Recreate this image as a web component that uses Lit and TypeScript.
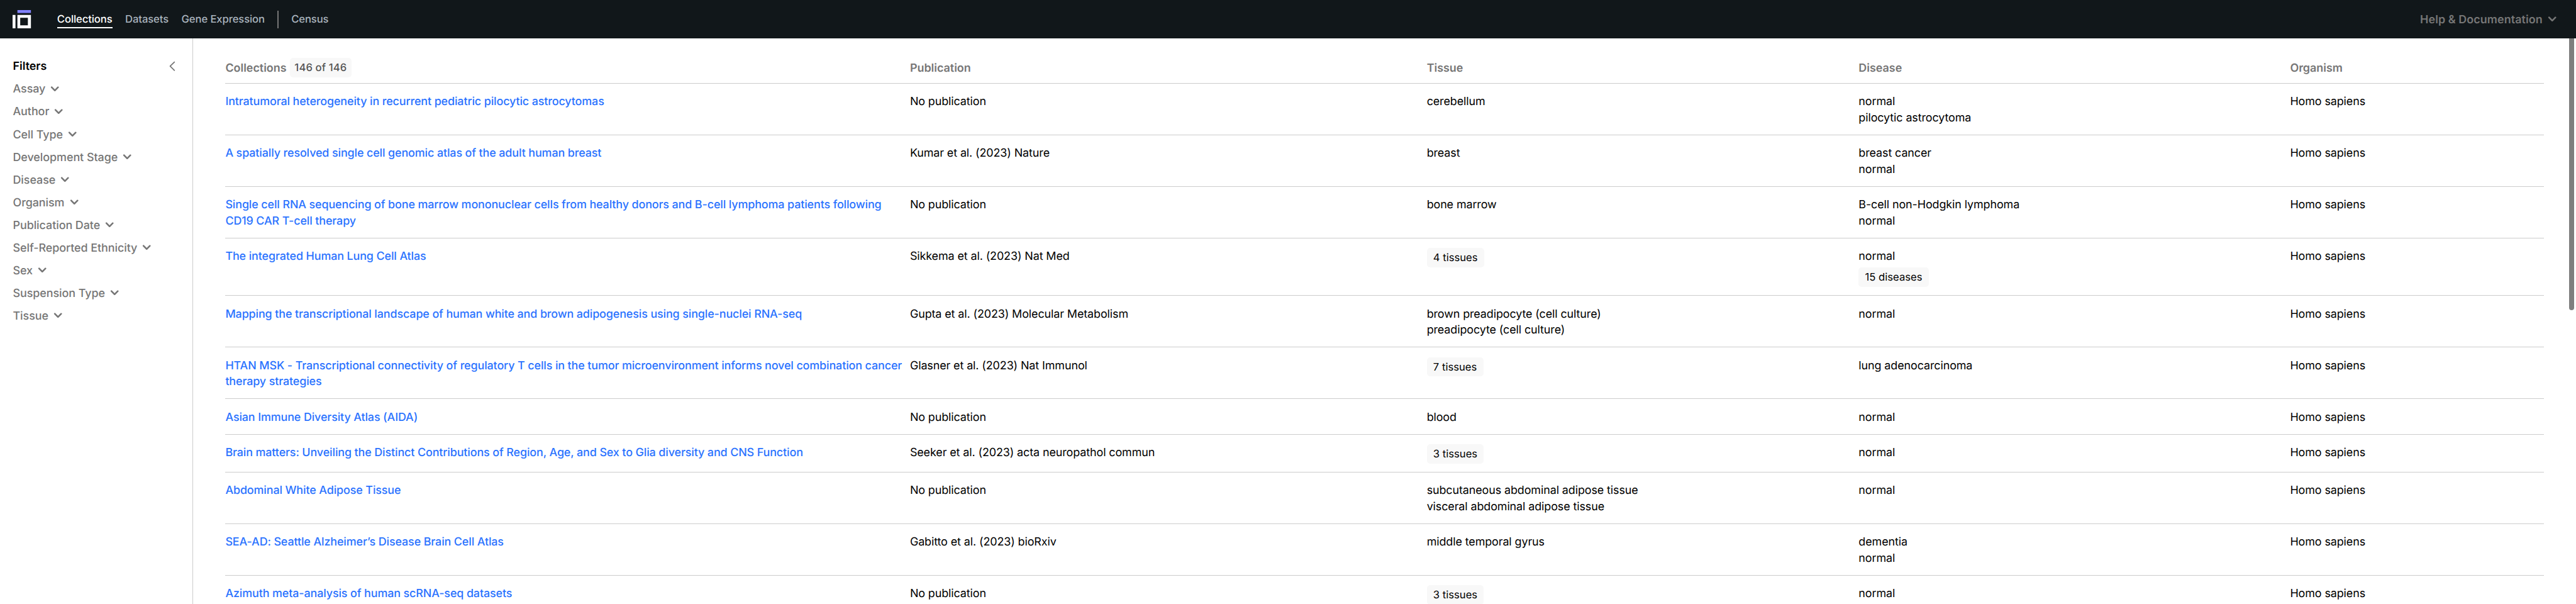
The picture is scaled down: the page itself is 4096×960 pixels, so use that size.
import { LitElement, html, css } from "lit";
import { customElement } from "lit/decorators.js";

interface Cell { lines: string[]; chip?: string }
interface Row { title: string; publication: string; tissue: Cell; disease: Cell }

const t = (...lines: string[]): Cell => ({ lines });
const c = (chip: string, ...lines: string[]): Cell => ({ lines, chip });

const ROWS: Row[] = [
  { title: "Intratumoral heterogeneity in recurrent pediatric pilocytic astrocytomas", publication: "No publication", tissue: t("cerebellum"), disease: t("normal", "pilocytic astrocytoma") },
  { title: "A spatially resolved single cell genomic atlas of the adult human breast", publication: "Kumar et al. (2023) Nature", tissue: t("breast"), disease: t("breast cancer", "normal") },
  { title: "Single cell RNA sequencing of bone marrow mononuclear cells from healthy donors and B-cell lymphoma patients following CD19 CAR T-cell therapy", publication: "No publication", tissue: t("bone marrow"), disease: t("B-cell non-Hodgkin lymphoma", "normal") },
  { title: "The integrated Human Lung Cell Atlas", publication: "Sikkema et al. (2023) Nat Med", tissue: c("4 tissues"), disease: c("15 diseases", "normal") },
  { title: "Mapping the transcriptional landscape of human white and brown adipogenesis using single-nuclei RNA-seq", publication: "Gupta et al. (2023) Molecular Metabolism", tissue: t("brown preadipocyte (cell culture)", "preadipocyte (cell culture)"), disease: t("normal") },
  { title: "HTAN MSK - Transcriptional connectivity of regulatory T cells in the tumor microenvironment informs novel combination cancer therapy strategies", publication: "Glasner et al. (2023) Nat Immunol", tissue: c("7 tissues"), disease: t("lung adenocarcinoma") },
  { title: "Asian Immune Diversity Atlas (AIDA)", publication: "No publication", tissue: t("blood"), disease: t("normal") },
  { title: "Brain matters: Unveiling the Distinct Contributions of Region, Age, and Sex to Glia diversity and CNS Function", publication: "Seeker et al. (2023) acta neuropathol commun", tissue: c("3 tissues"), disease: t("normal") },
  { title: "Abdominal White Adipose Tissue", publication: "No publication", tissue: t("subcutaneous abdominal adipose tissue", "visceral abdominal adipose tissue"), disease: t("normal") },
  { title: "SEA-AD: Seattle Alzheimer’s Disease Brain Cell Atlas", publication: "Gabitto et al. (2023) bioRxiv", tissue: t("middle temporal gyrus"), disease: t("dementia", "normal") },
  { title: "Azimuth meta-analysis of human scRNA-seq datasets", publication: "No publication", tissue: c("3 tissues"), disease: t("normal") },
];

const FILTERS = ["Assay", "Author", "Cell Type", "Development Stage", "Disease", "Organism", "Publication Date", "Self-Reported Ethnicity", "Sex", "Suspension Type", "Tissue"];

const chevronDown = html`<svg class="chev" viewBox="0 0 16 16"><path fill="currentColor" d="M12 5c-.28 0-.53.11-.71.29L8 8.59l-3.29-3.3a1.003 1.003 0 00-1.42 1.42l4 4c.18.18.43.29.71.29s.53-.11.71-.29l4-4A1.003 1.003 0 0012 5z"/></svg>`;

@customElement("app-header")
class AppHeader extends LitElement {
  static styles = css`
    :host { display: flex; align-items: center; justify-content: space-between; height: 48px; padding: 0 16px; background: #11171a; box-sizing: border-box; flex: none; }
    .left, .nav { display: flex; align-items: center; }
    .logo { display: block; width: 23px; height: 23px; margin-right: 32px; }
    .nav { gap: 16px; height: 22px; }
    .item { font-size: 13px; font-weight: 500; line-height: 18px; height: 22px; color: #a9b3bd; box-sizing: border-box; padding-top: 2.8px; letter-spacing: -0.08px; }
    .active { color: #fff; border-bottom: 2px solid #fff; }
    .divider { width: 1px; height: 22px; background: #767676; }
    .help { display: flex; align-items: center; gap: 4px; font-size: 14px; font-weight: 600; line-height: 18px; letter-spacing: 0.06px; color: #767676; margin-right: 5.6px; }
    .help span { padding-top: 1.6px; }
    .chev { width: 16px; height: 16px; display: block; }
  `;
  render() {
    return html`
      <div class="left">
        <svg class="logo" viewBox="0 0 23 23">
          <path fill="#8282ff" d="M6 0h16.8v3.6H6z"/>
          <path fill="#fff" fill-rule="evenodd" d="M0 6h3.6v16.8H0zM6 6h16.8v16.8H6zM9.5 9.5v9.5h9.5V9.5z"/>
        </svg>
        <nav class="nav">
          <span class="item active">Collections</span>
          <span class="item">Datasets</span>
          <span class="item">Gene Expression</span>
          <span class="divider"></span>
          <span class="item">Census</span>
        </nav>
      </div>
      <div class="help"><span>Help &amp; Documentation</span>${chevronDown}</div>`;
  }
}

@customElement("filter-sidebar")
class FilterSidebar extends LitElement {
  static styles = css`
    :host { display: block; width: 240px; box-sizing: border-box; padding: 24px 16px 0; border-right: 0.79px solid #ccc; flex: none; }
    .head { display: flex; justify-content: space-between; align-items: center; height: 20px; font-size: 14px; font-weight: 600; color: #000; margin-bottom: 9.1px; }
    .head span, .filter span { padding-top: 1.4px; }
    .collapse { width: 16px; height: 16px; display: block; margin-right: 1px; color: #767676; }
    .filter { display: flex; align-items: center; gap: 4px; height: 18.18px; margin-bottom: 10px; font-size: 14px; font-weight: 500; letter-spacing: -0.04px; line-height: 18px; color: #767676; }
    .chev { width: 16px; height: 16px; display: block; }
  `;
  render() {
    return html`
      <div class="head"><span>Filters</span>
        <svg class="collapse" viewBox="0 0 16 16"><path d="M10.4 2.8L5.1 8l5.3 5.2" fill="none" stroke="currentColor" stroke-width="1.4" stroke-linecap="round" stroke-linejoin="round"/></svg>
      </div>
      ${FILTERS.map((f) => html`<div class="filter"><span>${f}</span>${chevronDown}</div>`)}`;
  }
}

@customElement("collections-table")
class CollectionsTable extends LitElement {
  static styles = css`
    :host { display: block; flex: 1; min-width: 0; padding: 16px 40px 0; box-sizing: border-box; font-size: 14px; line-height: 20px; letter-spacing: -0.075px; color: #000; }
    .row { display: grid; grid-template-columns: 842.4px 634px 528.5px 528px 1fr; column-gap: 8px; padding: 12.8px 0 10.49px; border-bottom: 0.79px solid #ccc; box-sizing: border-box; }
    .header { height: 40px; padding: 8px 0 0; font-weight: 600; letter-spacing: 0; color: #767676; }
    .header .name { display: flex; gap: 4px; height: 24px; line-height: 20px; }
    .label { padding-top: 2.8px; }
    .count { display: inline-block; height: 24px; line-height: 25.6px; padding: 0 6px; border-radius: 4px; background: #f8f8f8; color: #545454; font-size: 13px; font-weight: 500; letter-spacing: 0.1px; }
    .title { color: #2b73ff; font-weight: 500; letter-spacing: -0.09px; }
    .cell { display: flex; flex-direction: column; align-items: flex-start; }
    .chip { height: 24px; line-height: 25.6px; margin-top: -0.8px; padding: 0 8px; border-radius: 4px; background: #f8f8f8; font-size: 13px; letter-spacing: 0; }
    .chip:not(:first-child) { margin-top: 3.2px; }
  `;
  cell(v: Cell) {
    return html`<div class="cell">${v.lines.map((l) => html`<span>${l}</span>`)}${v.chip ? html`<span class="chip">${v.chip}</span>` : ""}</div>`;
  }
  render() {
    return html`
      <div class="row header">
        <div class="name"><span class="label">Collections</span><span class="count">146 of 146</span></div>
        <span class="label">Publication</span><span class="label">Tissue</span><span class="label">Disease</span><span class="label">Organism</span>
      </div>
      ${ROWS.map((r) => html`<div class="row">
        <div class="title">${r.title}</div>
        <div>${r.publication}</div>
        ${this.cell(r.tissue)}${this.cell(r.disease)}
        <div>Homo sapiens</div>
      </div>`)}`;
  }
}

@customElement("app-root")
class AppRoot extends LitElement {
  static styles = css`
    :host { display: block; width: 4096px; height: 960px; overflow: hidden; background: #fff; }
    .page { zoom: 1.28; width: 3200px; height: 750px; display: flex; flex-direction: column; overflow: hidden; position: relative; font-family: Inter, "Liberation Sans", sans-serif; text-rendering: geometricPrecision; }
    .body { display: flex; flex: 1; min-height: 0; }
    .thumb { position: absolute; right: 2px; top: 48px; width: 7px; height: 337px; background: #7f7f7f; border-radius: 0 0 3.5px 3.5px; }
  `;
  render() {
    return html`<div class="page">
      <app-header></app-header>
      <div class="body"><filter-sidebar></filter-sidebar><collections-table></collections-table></div>
      <div class="thumb"></div>
    </div>`;
  }
}
